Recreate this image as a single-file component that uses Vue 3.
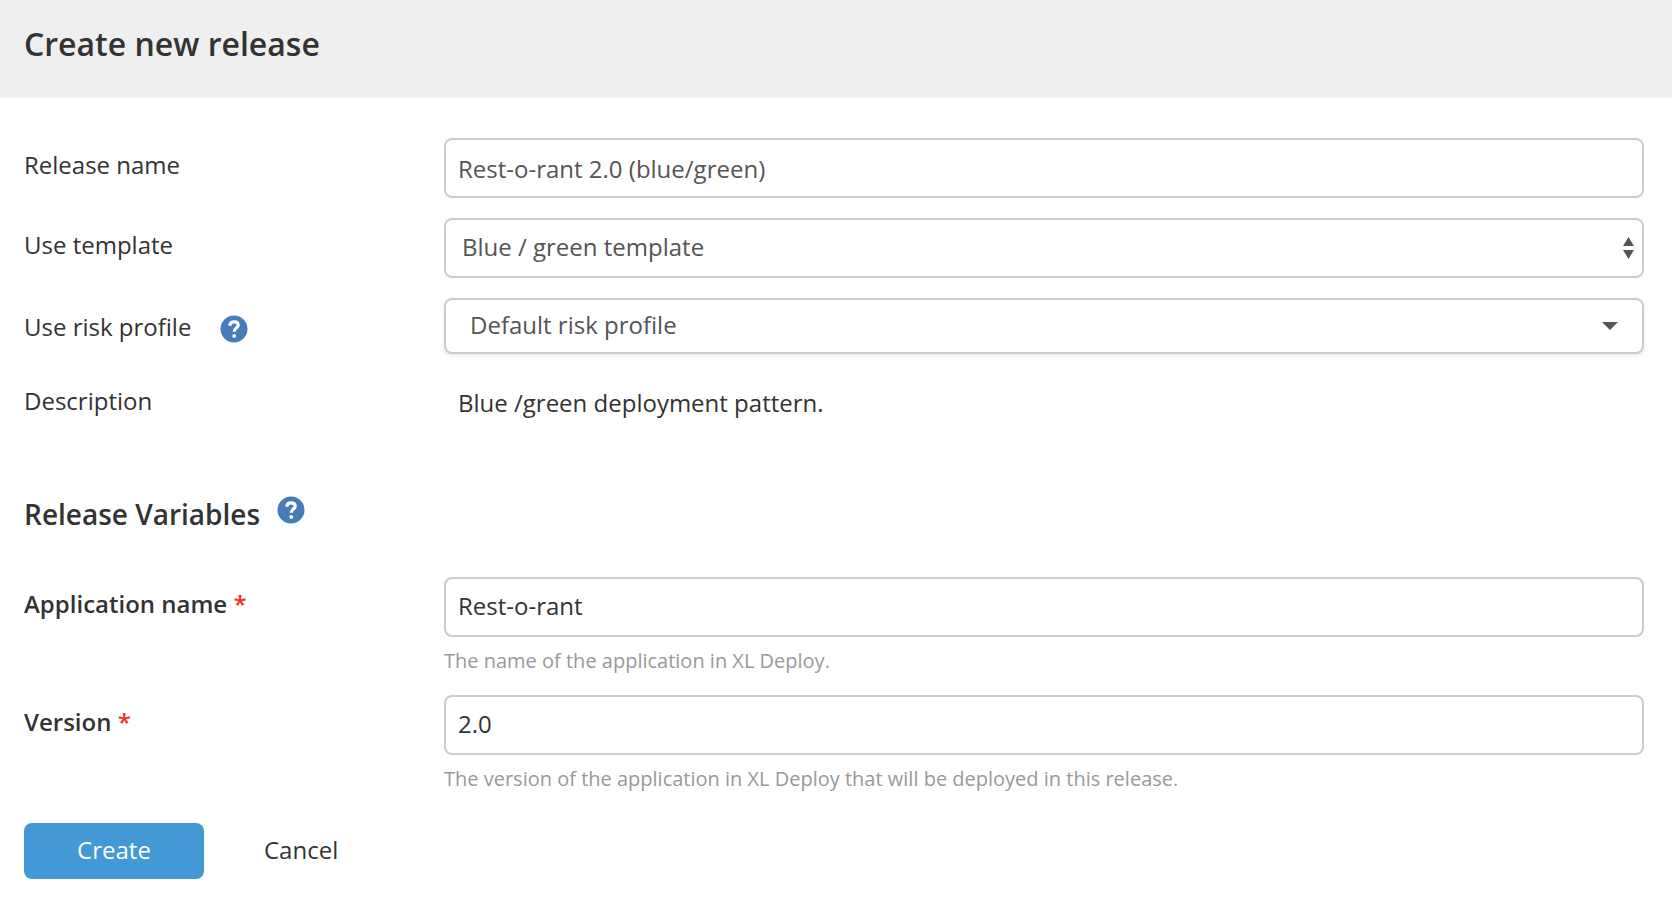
<script setup>
import { ref } from 'vue'

const releaseName = ref('Rest-o-rant 2.0 (blue/green)')
const template = ref('Blue / green template')
const riskProfile = ref('Default risk profile')
const applicationName = ref('Rest-o-rant')
const version = ref('2.0')
</script>

<template>
  <div class="page">
    <header class="header">
      <h1 class="title">Create new release</h1>
    </header>

    <form class="form" @submit.prevent>
      <div class="row">
        <label class="label" for="release-name">Release name</label>
        <input id="release-name" v-model="releaseName" class="control control-name" type="text" />
      </div>

      <div class="row">
        <label class="label" for="template">Use template</label>
        <div class="select-wrap">
          <select id="template" v-model="template" class="control control-template">
            <option>Blue / green template</option>
          </select>
          <svg class="arrows" width="11" height="22" viewBox="0 0 11 22" aria-hidden="true">
            <path d="M5.500 0L11 9H0ZM0 13H11L5.500 22Z" fill="#555" />
          </svg>
        </div>
      </div>

      <div class="row">
        <div class="label-group">
          <label for="risk-profile">Use risk profile</label>
          <button class="help" type="button" aria-label="Help on risk profiles">
            <svg width="28" height="28" viewBox="0 0 28 28" aria-hidden="true">
              <circle cx="14" cy="14" r="13.500" fill="#467cb7" />
              <path d="M9.700 10.700C10 8.200 11.600 6.900 14.100 6.900C16.600 6.900 18.200 8.200 18.200 10.200C18.200 13 14.200 13.200 14.200 16.800" fill="none" stroke="#fff" stroke-width="3.200" />
              <circle cx="14.200" cy="20.900" r="1.900" fill="#fff" />
            </svg>
          </button>
        </div>
        <div class="select-wrap">
          <select id="risk-profile" v-model="riskProfile" class="control control-risk">
            <option>Default risk profile</option>
          </select>
          <svg class="caret" width="16" height="8" viewBox="0 0 16 8" aria-hidden="true">
            <path d="M0 0H16L8 8Z" fill="#555" />
          </svg>
        </div>
      </div>

      <div class="row">
        <div class="label">Description</div>
        <p class="description">Blue /green deployment pattern.</p>
      </div>

      <div class="section">
        <h2 class="section-title">Release Variables</h2>
        <button class="help" type="button" aria-label="Help on release variables">
          <svg width="28" height="28" viewBox="0 0 28 28" aria-hidden="true">
            <circle cx="14" cy="14" r="13.500" fill="#467cb7" />
            <path d="M9.700 10.700C10 8.200 11.600 6.900 14.100 6.900C16.600 6.900 18.200 8.200 18.200 10.200C18.200 13 14.200 13.200 14.200 16.800" fill="none" stroke="#fff" stroke-width="3.200" />
            <circle cx="14.200" cy="20.900" r="1.900" fill="#fff" />
          </svg>
        </button>
      </div>

      <div class="row">
        <label class="label strong" for="application-name">Application name <span class="required">*</span></label>
        <div>
          <input id="application-name" v-model="applicationName" class="control control-variable" type="text" aria-describedby="application-hint" />
          <p id="application-hint" class="hint">The name of the application in XL Deploy.</p>
        </div>
      </div>

      <div class="row">
        <label class="label strong" for="version">Version <span class="required">*</span></label>
        <div>
          <input id="version" v-model="version" class="control control-variable" type="text" aria-describedby="version-hint" />
          <p id="version-hint" class="hint">The version of the application in XL Deploy that will be deployed in this release.</p>
        </div>
      </div>

      <div class="actions">
        <button class="button primary" type="submit">Create</button>
        <button class="button plain" type="button">Cancel</button>
      </div>
    </form>
  </div>
</template>

<style>
body {
  background: #fff;
}
</style>

<style scoped>
.page {
  font-family: "Open Sans", "Noto Sans", sans-serif;
  font-size: 24px;
  line-height: 32px;
  color: #333;
}

.header {
  padding: 22px 24px 32px;
  background: #efefef;
}

.title {
  margin: 0;
  font-size: 32px;
  line-height: 44px;
  font-weight: 600;
}

.form {
  display: flex;
  flex-direction: column;
  gap: 20px;
  padding: 40px 28px 40px 24px;
}

.row {
  display: grid;
  grid-template-columns: 420px minmax(0, 1fr);
  align-items: start;
}

.label {
  padding-top: 11px;
}

.label-group {
  display: flex;
  align-items: flex-end;
  gap: 29px;
  padding-top: 13px;
}

.strong {
  font-weight: 600;
}

.required {
  color: #ee3124;
}

.help {
  display: flex;
  padding: 0;
  border: 0;
  background: none;
  cursor: pointer;
}

.control {
  display: block;
  box-sizing: border-box;
  width: 100%;
  height: 60px;
  margin: 0;
  border: 2px solid #ccc;
  border-radius: 8px;
  background: #fff;
  font: inherit;
  color: #555;
  appearance: none;
}

.control-name {
  padding: 0 12px;
}

.control-template {
  padding: 0 40px 2px 16px;
}

.control-risk {
  height: 56px;
  padding: 0 60px 2px 24px;
  box-shadow: 0 2px 4px rgba(0, 0, 0, 0.08);
}

.control-variable {
  padding: 0 12px 4px;
  color: #333;
}

.select-wrap {
  position: relative;
}

.arrows,
.caret {
  position: absolute;
  pointer-events: none;
}

.arrows {
  top: 19px;
  right: 10px;
}

.caret {
  top: 24px;
  right: 26px;
}

.description {
  margin: 0;
  padding: 13px 14px 0;
}

.section {
  display: flex;
  align-items: flex-start;
  gap: 17px;
  margin: 56px 0 24px;
}

.section-title {
  margin: 0;
  font-size: 28px;
  line-height: 38px;
  font-weight: 600;
}

.section .help {
  padding-top: 1px;
}

.hint {
  margin: 10px 0 0;
  font-size: 20px;
  line-height: 28px;
  color: #999;
}

.actions {
  display: flex;
  gap: 60px;
  margin-top: 10px;
}

.button {
  height: 56px;
  padding: 0 0 2px;
  border: 0;
  border-radius: 8px;
  font: inherit;
  cursor: pointer;
}

.primary {
  width: 180px;
  background: #4299d6;
  color: #fff;
}

.plain {
  background: none;
  color: #333;
}
</style>
